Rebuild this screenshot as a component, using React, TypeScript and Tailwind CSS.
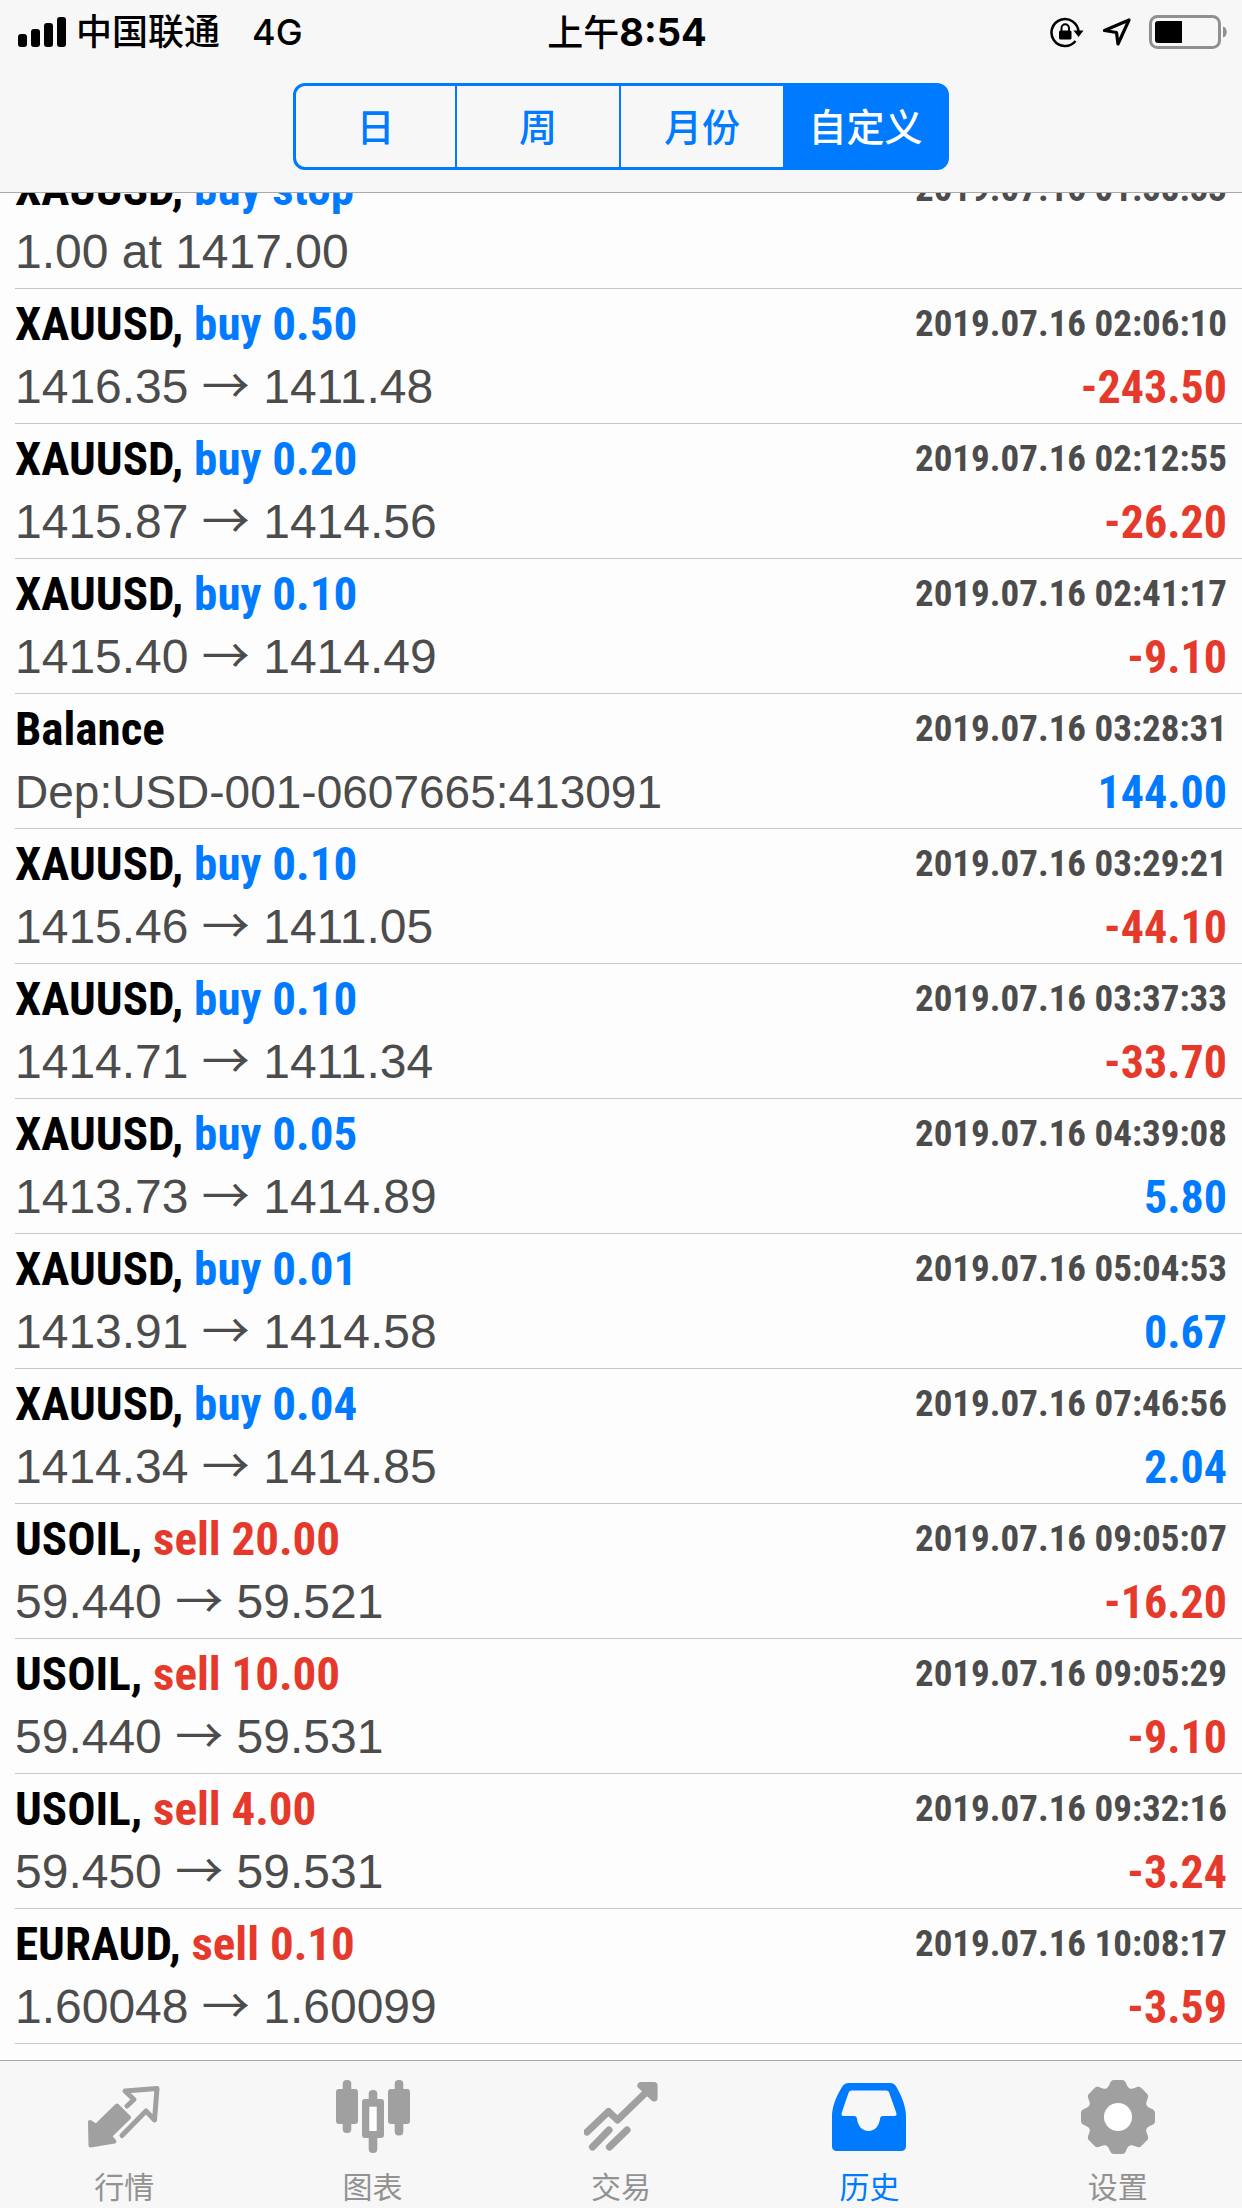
import { useLayoutEffect, useRef, useState, type ReactNode } from "react"
import clsx from "clsx"

type Deal = {
  symbol: string
  side?: "buy" | "sell"
  volume?: string
  time: string
  detail?: string
  comment?: string
  open?: string
  close?: string
  profit?: string
}

const deals: Deal[] = [
  { symbol: "XAUUSD", side: "buy", volume: "stop", time: "2019.07.16 01:58:53", detail: "1.00 at 1417.00" },
  { symbol: "XAUUSD", side: "buy", volume: "0.50", time: "2019.07.16 02:06:10", open: "1416.35", close: "1411.48", profit: "-243.50" },
  { symbol: "XAUUSD", side: "buy", volume: "0.20", time: "2019.07.16 02:12:55", open: "1415.87", close: "1414.56", profit: "-26.20" },
  { symbol: "XAUUSD", side: "buy", volume: "0.10", time: "2019.07.16 02:41:17", open: "1415.40", close: "1414.49", profit: "-9.10" },
  { symbol: "Balance", time: "2019.07.16 03:28:31", comment: "Dep:USD-001-0607665:413091", profit: "144.00" },
  { symbol: "XAUUSD", side: "buy", volume: "0.10", time: "2019.07.16 03:29:21", open: "1415.46", close: "1411.05", profit: "-44.10" },
  { symbol: "XAUUSD", side: "buy", volume: "0.10", time: "2019.07.16 03:37:33", open: "1414.71", close: "1411.34", profit: "-33.70" },
  { symbol: "XAUUSD", side: "buy", volume: "0.05", time: "2019.07.16 04:39:08", open: "1413.73", close: "1414.89", profit: "5.80" },
  { symbol: "XAUUSD", side: "buy", volume: "0.01", time: "2019.07.16 05:04:53", open: "1413.91", close: "1414.58", profit: "0.67" },
  { symbol: "XAUUSD", side: "buy", volume: "0.04", time: "2019.07.16 07:46:56", open: "1414.34", close: "1414.85", profit: "2.04" },
  { symbol: "USOIL", side: "sell", volume: "20.00", time: "2019.07.16 09:05:07", open: "59.440", close: "59.521", profit: "-16.20" },
  { symbol: "USOIL", side: "sell", volume: "10.00", time: "2019.07.16 09:05:29", open: "59.440", close: "59.531", profit: "-9.10" },
  { symbol: "USOIL", side: "sell", volume: "4.00", time: "2019.07.16 09:32:16", open: "59.450", close: "59.531", profit: "-3.24" },
  { symbol: "EURAUD", side: "sell", volume: "0.10", time: "2019.07.16 10:08:17", open: "1.60048", close: "1.60099", profit: "-3.59" },
  { symbol: "XAUUSD", side: "sell", volume: "0.10", time: "2019.07.16 10:15:42" },
]

const periods = ["日", "周", "月份", "自定义"]

function QuotesIcon() {
  return (
    <svg viewBox="0 0 74 74" className="size-[74px]" strokeLinejoin="round" strokeLinecap="round" stroke="currentColor">
      <path d="M40 26 47 19.5 38 11 70 8.5 67.5 40 59 31 35 55.5" fill="none" strokeWidth="5" />
      <path d="M30 25.5 42 37.5 23 56 27.5 61.5 3.5 65.5 3 42 9 46Z" fill="currentColor" strokeWidth="4" />
    </svg>
  )
}

function ChartIcon() {
  return (
    <svg viewBox="0 0 74 74" className="size-[74px]" fill="currentColor">
      <rect x="0" y="9" width="22" height="35" rx="3" />
      <rect x="6.7" y="0" width="8.6" height="53" rx="4" />
      <rect x="52" y="9" width="22" height="35" rx="3" />
      <rect x="58.7" y="0" width="8.6" height="55.5" rx="4" />
      <rect x="26" y="19" width="22" height="39" rx="3" />
      <rect x="32.7" y="10" width="8.6" height="63" rx="4" />
      <rect x="33.3" y="26.7" width="7.4" height="24.3" className="fill-white" />
    </svg>
  )
}

function TradeIcon() {
  return (
    <svg viewBox="0 0 74 74" className="size-[74px]" fill="none" stroke="currentColor" strokeWidth="7.2" strokeLinecap="round" strokeLinejoin="round">
      <path d="M3 52 24.5 31.5 33.5 40 66 8.5" />
      <path d="M57 5.5H70V18Z" fill="currentColor" />
      <path d="M8.5 67 25 50M25.5 67 43 50" />
    </svg>
  )
}

function HistoryIcon() {
  return (
    <svg viewBox="0 0 74 74" className="size-[74px]" fill="currentColor">
      <path
        fillRule="evenodd"
        d="M17 3H58C61 3 63 4.5 64.5 7C69 15 74 26 74 36V66C74 69.5 72 71 69 71H5C2 71 0 69.5 0 66V36C0 26 5 15 10 7C11.5 4.5 14 3 17 3ZM20 10.5C18 10.5 17 11.5 16.3 13.5L10 32C9 35 9.5 36 12 36H22C24 36 24.7 37 25 39C26 46 30 51 36.5 51C43 51 47 46 48 39C48.3 37 49 36 51 36H62C64.5 36 65 35 64 32L57.5 13.5C57 11.5 56 10.5 54 10.5Z"
      />
    </svg>
  )
}

function SettingsIcon() {
  return (
    <svg viewBox="0 0 74 74" className="size-[74px]" fill="currentColor">
      {[0, 45, 90, 135, 180, 225, 270, 315].map((a) => (
        <path key={a} transform={`rotate(${a} 37 37)`} d="M23 9.5C26 9 27.5 7 29 3C30 1 31 0 33 0H41C43 0 44 1 45 3C46.5 7 48 9 51 9.5L37 22Z" />
      ))}
      <circle cx="37" cy="37" r="30" />
      <circle cx="37" cy="37" r="14" className="fill-white" />
    </svg>
  )
}

const tabs: { label: string; icon: ReactNode }[] = [
  { label: "行情", icon: <QuotesIcon /> },
  { label: "图表", icon: <ChartIcon /> },
  { label: "交易", icon: <TradeIcon /> },
  { label: "历史", icon: <HistoryIcon /> },
  { label: "设置", icon: <SettingsIcon /> },
]

function StatusBar() {
  return (
    <div className="grid h-16 grid-cols-3 items-center pr-[14px] pl-[18px] text-[36px] leading-none font-medium text-black">
      <div className="flex items-center">
        <svg viewBox="0 0 48 30" className="mr-[10px] h-[30px] w-12" fill="currentColor" aria-label="Signal">
          <rect x="0" y="17" width="9" height="13" rx="3" />
          <rect x="13" y="12" width="9" height="18" rx="3" />
          <rect x="26" y="6" width="9" height="24" rx="3" />
          <rect x="39" y="0" width="9" height="30" rx="3" />
        </svg>
        <span>中国联通</span>
        <span className="ml-8">4G</span>
      </div>
      <div className="pl-2 text-center">
        上午<span className="text-[38px] font-bold">8:54</span>
      </div>
      <div className="flex items-center justify-end">
        <svg viewBox="0 0 34 32" className="h-8 w-[34px]" fill="none" stroke="currentColor" strokeWidth="2.5" aria-label="Rotation lock">
          <path d="M28.5 16A13.5 13.5 0 1 0 25.5 25" />
          <path d="M23.5 14.5H33.5L28.5 21Z" fill="currentColor" stroke="none" />
          <rect x="9" y="14.5" width="12.5" height="9" rx="1.5" fill="currentColor" stroke="none" />
          <path d="M11.5 15V12A3.7 3.7 0 0 1 19 12V15" strokeWidth="2" />
        </svg>
        <svg viewBox="0 0 30 30" className="ml-[18px] size-[30px]" fill="none" stroke="currentColor" strokeWidth="3.2" strokeLinejoin="round" aria-label="Location">
          <path d="M27 3 2.5 13.5 14.5 15.5 16 27Z" />
        </svg>
        <svg viewBox="0 0 79 34" className="ml-[17px] h-[34px] w-[79px]" aria-label="Battery">
          <rect x="1.5" y="1.5" width="69" height="31" rx="7" fill="none" strokeWidth="3" className="stroke-[#909090]" />
          <path d="M74 11.5C79 12.5 79 21.5 74 22.5Z" className="fill-[#909090]" />
          <path d="M9 6H33V28H9C7 28 6 27 6 25V9C6 7 7 6 9 6Z" />
        </svg>
      </div>
    </div>
  )
}

function DealRow({ deal }: { deal: Deal }) {
  return (
    <li className="flex h-[135px] justify-between border-b border-[#c8c7cc] pt-1 pr-[15px]">
      <div>
        <p className="font-['Roboto_Condensed','Liberation_Sans',sans-serif] text-[47px] leading-[62px] font-bold text-black">
          {deal.symbol}
          {deal.side && (
            <>
              , <span className={deal.side === "buy" ? "text-[#007aff]" : "text-[#e53a2b]"}>{deal.side} {deal.volume}</span>
            </>
          )}
        </p>
        {deal.comment && <p className="text-[46px] leading-[64px] text-[#4c4c4c]">{deal.comment}</p>}
        {deal.detail && <p className="text-[48px] leading-[64px] text-[#4c4c4c]">{deal.detail}</p>}
        {deal.open && (
          <p className="text-[48px] leading-[64px] text-[#4c4c4c]">
            {deal.open} <span className="font-['Noto_Sans_CJK_SC',sans-serif] leading-none">→</span> {deal.close}
          </p>
        )}
      </div>
      <div className="text-right font-['Roboto_Condensed','Liberation_Sans',sans-serif] font-bold">
        <p className="text-[37px] leading-[62px] text-[#4c4c4c]">{deal.time}</p>
        {deal.profit && (
          <p className={clsx("text-[46px] leading-[64px]", deal.profit.startsWith("-") ? "text-[#e53a2b]" : "text-[#007aff]")}>
            {deal.profit}
          </p>
        )}
      </div>
    </li>
  )
}

export default function App() {
  const [period, setPeriod] = useState("自定义")
  const [tab, setTab] = useState("历史")
  const listRef = useRef<HTMLElement>(null)

  // Open the list slightly scrolled
  useLayoutEffect(() => {
    if (listRef.current) listRef.current.scrollTop = 39
  }, [])

  return (
    <div className="flex h-screen flex-col bg-[#fdfdfd] font-['Liberation_Sans','Noto_Sans_CJK_SC',sans-serif]">
      <header className="shrink-0 border-b border-[#a9a9ab] bg-[#f7f7f7] pb-[22px] font-['Inter','Noto_Sans_CJK_SC',sans-serif]">
        <StatusBar />
        <div className="mx-auto mt-[19px] grid h-[87px] w-[656px] grid-cols-4">
          {periods.map((p) => (
            <button
              key={p}
              onClick={() => setPeriod(p)}
              className={clsx(
                "border-y-3 border-r-2 border-[#007aff] text-[38px] leading-none font-medium first:rounded-l-xl first:border-l-3 last:rounded-r-xl last:border-r-3",
                p === period ? "bg-[#007aff] text-white" : "text-[#007aff]"
              )}
            >
              {p}
            </button>
          ))}
        </div>
      </header>

      <main ref={listRef} className="min-h-0 flex-1 overflow-y-auto [scrollbar-width:none]">
        <ul className="pl-[15px]">
          {deals.map((deal) => (
            <DealRow key={deal.time} deal={deal} />
          ))}
        </ul>
      </main>

      <nav className="grid shrink-0 grid-cols-5 border-t border-[#a9a9ab] bg-[#f7f7f7] pt-[19px] pb-[2px]">
        {tabs.map(({ label, icon }) => (
          <button
            key={label}
            onClick={() => setTab(label)}
            className={clsx("flex flex-col items-center gap-4", label === tab ? "text-[#007aff]" : "text-[#a0a0a0]")}
          >
            {icon}
            <span className={clsx("text-[30px] leading-9", label !== tab && "text-[#929292]")}>{label}</span>
          </button>
        ))}
      </nav>
    </div>
  )
}
